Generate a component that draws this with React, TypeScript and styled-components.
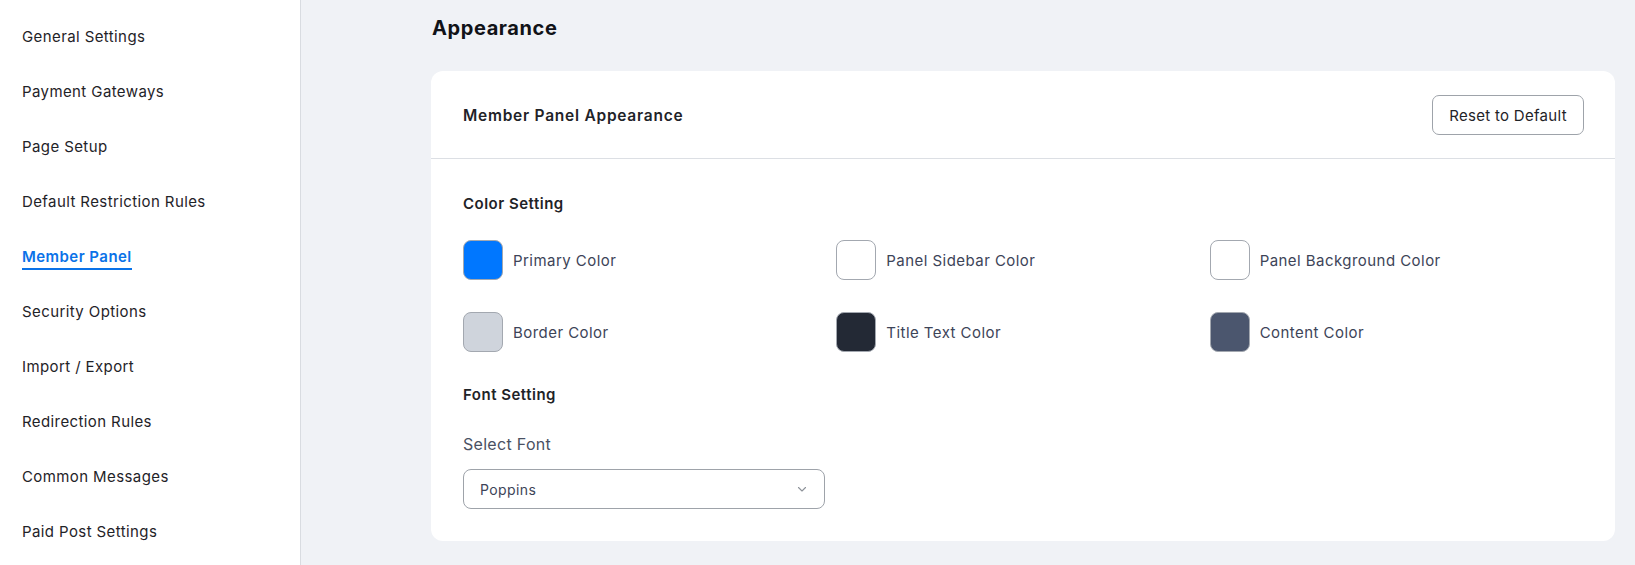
import React from "react";
import styled, { createGlobalStyle } from "styled-components";

const Global = createGlobalStyle`
  html, body { margin: 0; padding: 0; }
  body {
    font-family: Inter, "Noto Sans", "Liberation Sans", sans-serif;
    background: #f0f2f6;
    color: #1d2327;
  }
  * { box-sizing: border-box; }
`;

const Layout = styled.div`
  display: flex;
  min-height: 565px;
  background: #f0f2f6;
`;

const Sidebar = styled.nav`
  width: 301px;
  flex-shrink: 0;
  background: #ffffff;
  border-right: 1px solid #d9dce1;
  padding: 26px 0 0 22px;
  display: flex;
  flex-direction: column;
  gap: 31px;
`;

const NavItem = styled.a<{ $active?: boolean }>`
  align-self: flex-start;
  font-size: 15px;
  line-height: 22px;
  font-weight: ${(p) => (p.$active ? 600 : 400)};
  color: ${(p) => (p.$active ? "#0a72e8" : "#1f2328")};
  text-decoration: none;
  letter-spacing: ${(p) => (p.$active ? "0.45px" : "0.4px")};
  border-bottom: 2px solid ${(p) => (p.$active ? "#0a72e8" : "transparent")};
  height: 22px;
  box-sizing: content-box;
`;

const Main = styled.main`
  flex: 1;
  padding: 14px 20px 25px 130px;
  display: flex;
  flex-direction: column;
`;

const PageTitle = styled.h1`
  margin: 0 0 29px 1px;
  font-size: 20px;
  line-height: 28px;
  font-weight: 700;
  color: #111318;
  letter-spacing: 0.6px;
`;

const Card = styled.section`
  background: #ffffff;
  border-radius: 12px;
`;

const CardHeader = styled.div`
  display: flex;
  align-items: center;
  justify-content: space-between;
  padding: 24px 31px 23px 32px;
  border-bottom: 1px solid #dcdfe4;
`;

const CardTitle = styled.h2`
  margin: 0;
  font-size: 15.5px;
  font-weight: 600;
  color: #1f2328;
  letter-spacing: 0.75px;
`;

const OutlineButton = styled.button`
  height: 40px;
  width: 152px;
  border: 1px solid #9ea3aa;
  border-radius: 7px;
  background: #ffffff;
  font-family: inherit;
  font-size: 15px;
  color: #1f2328;
  letter-spacing: 0.3px;
  cursor: pointer;
`;

const CardBody = styled.div`
  padding: 34px 32px 32px 32px;
  display: flex;
  flex-direction: column;
`;

const SectionTitle = styled.h3<{ $top?: number }>`
  margin: ${(p) => p.$top ?? 0}px 0 0 0;
  font-size: 15px;
  line-height: 22px;
  font-weight: 600;
  color: #1f2328;
  letter-spacing: 0.5px;
`;

const SwatchGrid = styled.div`
  margin-top: 25px;
  display: grid;
  grid-template-columns: repeat(3, 1fr);
  row-gap: 32px;
`;

const SwatchItem = styled.div`
  display: flex;
  align-items: center;
  gap: 10px;
`;

const Swatch = styled.div<{ $color: string }>`
  width: 40px;
  height: 40px;
  border-radius: 8px;
  background: ${(p) => p.$color};
  border: 1px solid #a3a8b0;
`;

const SwatchLabel = styled.span`
  font-size: 15px;
  color: #3d4458;
  letter-spacing: 0.45px;
`;

const FieldLabel = styled.label`
  margin-top: 26px;
  font-size: 16px;
  line-height: 24px;
  color: #4a5163;
  letter-spacing: 0.3px;
`;

const SelectBox = styled.div`
  margin-top: 13px;
  width: 362px;
  height: 40px;
  border: 1px solid #9ea3aa;
  border-radius: 8px;
  display: flex;
  align-items: center;
  justify-content: space-between;
  padding: 0 16px 0 16px;
  font-size: 14px;
  color: #3d4458;
  letter-spacing: 0.4px;
`;

const Chevron = () => (
  <svg width="12" height="12" viewBox="0 0 12 12" fill="none">
    <path d="M2.5 4.5L6 8l3.5-3.5" stroke="#8d9299" strokeWidth="1.1" strokeLinecap="round" strokeLinejoin="round" />
  </svg>
);

const navItems = [
  "General Settings",
  "Payment Gateways",
  "Page Setup",
  "Default Restriction Rules",
  "Member Panel",
  "Security Options",
  "Import / Export",
  "Redirection Rules",
  "Common Messages",
  "Paid Post Settings",
];

const swatches = [
  { label: "Primary Color", color: "#0077ff" },
  { label: "Panel Sidebar Color", color: "#ffffff" },
  { label: "Panel Background Color", color: "#ffffff" },
  { label: "Border Color", color: "#cfd4dc" },
  { label: "Title Text Color", color: "#232935" },
  { label: "Content Color", color: "#4b566e" },
];

export default function App() {
  return (
    <>
      <Global />
      <Layout>
        <Sidebar>
          {navItems.map((n) => (
            <NavItem key={n} $active={n === "Member Panel"}>
              {n}
            </NavItem>
          ))}
        </Sidebar>
        <Main>
          <PageTitle>Appearance</PageTitle>
          <Card>
            <CardHeader>
              <CardTitle>Member Panel Appearance</CardTitle>
              <OutlineButton>Reset to Default</OutlineButton>
            </CardHeader>
            <CardBody>
              <SectionTitle>Color Setting</SectionTitle>
              <SwatchGrid>
                {swatches.map((s) => (
                  <SwatchItem key={s.label}>
                    <Swatch $color={s.color} />
                    <SwatchLabel>{s.label}</SwatchLabel>
                  </SwatchItem>
                ))}
              </SwatchGrid>
              <SectionTitle $top={32}>Font Setting</SectionTitle>
              <FieldLabel>Select Font</FieldLabel>
              <SelectBox>
                <span>Poppins</span>
                <Chevron />
              </SelectBox>
            </CardBody>
          </Card>
        </Main>
      </Layout>
    </>
  );
}
